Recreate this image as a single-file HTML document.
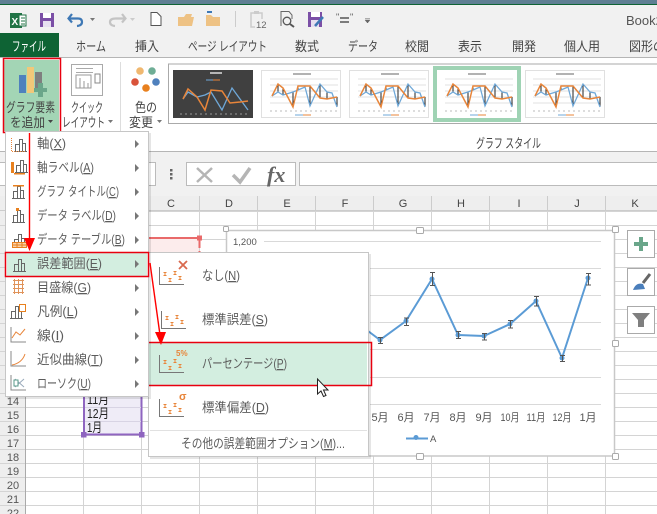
<!DOCTYPE html>
<html><head><meta charset="utf-8"><style>
html,body{margin:0;padding:0;background:#fff;width:657px;height:514px;overflow:hidden}
svg{display:block;font-family:"Liberation Sans","Noto Sans CJK JP",sans-serif}
.t{font-size:13px;fill:#444}
.m{font-size:13px;fill:#5c5c5c}
.u{text-decoration:underline}
.r{font-size:11px;fill:#555;text-anchor:middle}
.c{font-size:11px;fill:#444;text-anchor:middle}
.k{font-size:11px;fill:#555;text-anchor:middle}
.a{font-size:13px;fill:#222}
</style></head><body>
<svg width="657" height="514" viewBox="0 0 657 514" xmlns="http://www.w3.org/2000/svg">
<defs>
<symbol id="th" viewBox="0 0 80 48" width="80" height="48">
<g stroke="#e2e2e2" stroke-width="1"><path d="M8 9H76M8 15H76M8 21H76M8 27H76M8 33H76"/></g>
<g stroke="#222" stroke-width="1"><path d="M16 14V22M21 18V25M31 22V37M36 16V20M48 16V36M58 14V28M65 22V29M75 27V37"/></g>
<polyline fill="none" stroke="#6fa8d8" stroke-width="1.300" points="10,26 16,22 21,25 31,22 36,20 43,17 48,36 58,14 65,22 70,23 75,37"/>
<polyline fill="none" stroke="#e8853a" stroke-width="1.500" points="10,26 16,14 21,18 31,37 36,16 48,16 58,28 65,29 75,27"/>
<path d="M31 4H49" stroke="#999" stroke-width="1.500"/><path d="M33 45H41" stroke="#6fa8d8"/><path d="M41 45H49" stroke="#e8853a"/>
<path d="M8 41H76" stroke="#bbb" stroke-dasharray="2 3"/>
</symbol>
<symbol id="eb" viewBox="0 0 26 21" width="26" height="21">
<path d="M1.500 2V19.500H26" fill="none" stroke="#777"/>
<g fill="none" stroke="#e8853a"><path d="M5.500 7.500h3M5.500 10.500h3M7 7.500v3"/><path d="M10.500 13.500h3M10.500 16.500h3M12 13.500v3"/><path d="M15.500 6.500h3M15.500 9.500h3M17 6.500v3"/><path d="M20.500 11.500h3M20.500 14.500h3M22 11.500v3"/></g>
</symbol>
<symbol id="bars" viewBox="0 0 16 16" width="16" height="16">
<path d="M3.500 15V8.500H7.500V15M7.500 15V3.500H10.500V15M10.500 15V7.500H13.500V15M2 15.500H15" fill="none" stroke="#666"/>
</symbol>
</defs>

<!-- title bar -->
<rect width="657" height="33" fill="#f1f1f1"/>
<rect width="657" height="4" fill="#5f7f93"/>
<rect y="4" width="657" height="1" fill="#0e6334"/>
<!-- QAT -->
<rect x="10" y="13" width="12" height="15" fill="#217346"/><rect x="19" y="15" width="7" height="11" fill="#fff" stroke="#217346"/><path d="M21 18H25M21 21H25M21 24H25" stroke="#217346"/><text x="11.500" y="25" font-size="10" font-weight="bold" fill="#fff">X</text>
<rect x="40" y="13" width="14" height="14" fill="#7b4fa6"/><rect x="43" y="13" width="8" height="5" fill="#fff"/><rect x="43" y="21" width="8" height="6" fill="#e6dff0"/>
<path d="M72 14L68.500 18.500L72 22.500M69 18.500H78Q82 18.500 82 22T77 26" fill="none" stroke="#3e78b5" stroke-width="2.200"/><path d="M90 18h5l-2.500 3z" fill="#777"/>
<path d="M122 14L125.500 18.500L122 22.500M125 18.500H116Q110 18.500 110 22T115 26" fill="none" stroke="#c4c4c4" stroke-width="2.200"/><path d="M130 18h5l-2.500 3z" fill="#ccc"/>
<path d="M151 12.500H157L161 16.500V25.500H151Z" fill="#fff" stroke="#555"/>
<path d="M178 26V17H184L186 14H192L191 17H194L192 26Z" fill="#eec284"/>
<path d="M206 26V15H211L213 17H220V26Z" fill="#eec284"/><path d="M207 12H212" stroke="#3e78b5" stroke-width="2"/>
<rect x="235" y="11" width="1" height="16" fill="#ccc"/>
<rect x="251" y="13" width="11" height="14" fill="none" stroke="#ccc" stroke-width="1.500"/><rect x="254" y="11" width="5" height="3" fill="#ccc"/><rect x="255" y="19" width="12" height="9" fill="#f1f1f1"/><text x="256" y="28" font-size="9.500" fill="#666">12</text>
<path d="M281 26V11.500H289L292 15V19" fill="#f1f1f1" stroke="#666"/><circle cx="287" cy="21" r="3.800" fill="#f1f1f1" stroke="#555" stroke-width="1.300"/><path d="M290 24L294 27" stroke="#555" stroke-width="2"/>
<rect x="308" y="12" width="14" height="15" fill="#7b4fa6"/><rect x="311" y="12" width="9" height="5" fill="#fff"/><rect x="311" y="20" width="8" height="7" fill="#e6dff0"/><path d="M315 26L323 17" stroke="#3e78b5" stroke-width="2.500"/>
<text x="336" y="20" font-size="9" fill="#555">"</text><text x="350" y="20" font-size="9" fill="#555">"</text><path d="M340 18H349M340 22H349" stroke="#555" stroke-width="1.500"/>
<path d="M365 18.500H370M365 20h5l-2.500 3z" fill="#666" stroke="#666" stroke-width=".5"/>
<text x="626" y="25" font-size="13" fill="#555">Book2</text>

<!-- tabs -->
<rect y="33" width="657" height="25" fill="#f1f1f1"/>
<rect x="0" y="33" width="59" height="25" fill="#0e6334"/>
<text x="12" y="51" font-size="13" fill="#fff" textLength="34" lengthAdjust="spacingAndGlyphs">ファイル</text>
<text class="t" x="76" y="51" textLength="30" lengthAdjust="spacingAndGlyphs">ホーム</text>
<text class="t" x="135" y="51" textLength="24" lengthAdjust="spacingAndGlyphs">挿入</text>
<text class="t" x="188" y="51" textLength="79" lengthAdjust="spacingAndGlyphs">ページ レイアウト</text>
<text class="t" x="295" y="51" textLength="24" lengthAdjust="spacingAndGlyphs">数式</text>
<text class="t" x="348" y="51" textLength="30" lengthAdjust="spacingAndGlyphs">データ</text>
<text class="t" x="405" y="51" textLength="24" lengthAdjust="spacingAndGlyphs">校閲</text>
<text class="t" x="458" y="51" textLength="24" lengthAdjust="spacingAndGlyphs">表示</text>
<text class="t" x="512" y="51" textLength="24" lengthAdjust="spacingAndGlyphs">開発</text>
<text class="t" x="564" y="51" textLength="36" lengthAdjust="spacingAndGlyphs">個人用</text>
<text class="t" x="629" y="51" textLength="36" lengthAdjust="spacingAndGlyphs">図形の</text>

<!-- ribbon -->
<rect y="58" width="657" height="94" fill="#fff"/>
<rect y="57" width="657" height="1" fill="#b5b5b5"/>
<rect y="151" width="657" height="1" fill="#b5b5b5"/>
<rect x="120" y="62" width="1" height="70" fill="#ddd"/>
<rect x="168.500" y="64" width="490" height="59.500" fill="#fff" stroke="#aaa"/>
<text class="t" x="476" y="148" textLength="65" lengthAdjust="spacingAndGlyphs">グラフ スタイル</text>

<!-- add chart element -->
<rect x="4" y="60" width="55" height="71" fill="#a3d5b5"/>
<rect x="19" y="75" width="7" height="18" fill="#4f81bd"/><rect x="27" y="67" width="7" height="26" fill="#f2c879"/><rect x="35" y="72" width="7" height="17" fill="#7f7f7f"/>
<path d="M38 83H43V88H47V92H43V97H38V92H34V88H38Z" fill="#6aa68a"/>
<text class="t" x="6" y="112" textLength="49" lengthAdjust="spacingAndGlyphs">グラフ要素</text>
<text class="t" x="10" y="127" textLength="35" lengthAdjust="spacingAndGlyphs">を追加</text>
<path d="M48 120h5l-2.500 3z" fill="#444"/>
<rect x="3.500" y="58.500" width="57" height="74" fill="none" stroke="#e8000f" stroke-width="1.500"/>

<rect x="71.500" y="64.500" width="31" height="31" fill="#fff" stroke="#aaa"/>
<path d="M76 68.500H93M76 72.500H93" stroke="#aaa"/><path d="M76 88V75H91V88ZM80 88V78M84 88V81M88 88V83" fill="none" stroke="#999"/><rect x="95" y="74" width="5" height="9" fill="none" stroke="#888"/>
<text class="t" x="71" y="112" textLength="32" lengthAdjust="spacingAndGlyphs">クイック</text>
<text class="t" x="62" y="127" textLength="43" lengthAdjust="spacingAndGlyphs">レイアウト</text>
<path d="M108 120h5l-2.500 3z" fill="#777"/>

<circle cx="140" cy="71" r="3.800" fill="#f0b870"/><circle cx="152" cy="71" r="3.800" fill="#6fae96"/><circle cx="135" cy="82" r="3.800" fill="#d9533a"/><circle cx="156" cy="82" r="3.800" fill="#4f81bd"/><circle cx="146" cy="88" r="3.800" fill="#e8801e"/>
<text class="t" x="135" y="112" textLength="22" lengthAdjust="spacingAndGlyphs">色の</text>
<text class="t" x="129" y="127" textLength="24" lengthAdjust="spacingAndGlyphs">変更</text>
<path d="M157 120h5l-2.500 3z" fill="#777"/>

<!-- gallery -->
<rect x="173" y="70" width="80" height="48" fill="#404040"/>
<path d="M210 73H222" stroke="#ddd" stroke-width="1.500"/><path d="M206 80H213" stroke="#6fa8d8"/><path d="M213 80H220" stroke="#e8853a"/>
<path d="M180 114H250" stroke="#999" stroke-dasharray="2 3"/>
<polyline fill="none" stroke="#6fa8d8" stroke-width="1.300" points="183,99 188,92 197,97 205,95 211,92 222,110 232,88 240,99 248,110"/>
<polyline fill="none" stroke="#e8853a" stroke-width="1.500" points="183,99 188,89 197,97 205,110 211,90 222,91 230,103 240,102 248,101"/>
<rect x="261.500" y="70.500" width="79" height="47" fill="#fff" stroke="#e0e0e0"/><use href="#th" x="262" y="70"/>
<rect x="349.500" y="70.500" width="79" height="47" fill="#fff" stroke="#e0e0e0"/><use href="#th" x="350" y="70"/>
<rect x="433" y="66" width="88" height="56" fill="#9fd3b4"/><rect x="437" y="70" width="80" height="48" fill="#fff"/><use href="#th" x="437" y="70"/>
<rect x="525.500" y="70.500" width="79" height="47" fill="#fff" stroke="#e0e0e0"/><use href="#th" x="525" y="70"/>

<!-- formula bar -->
<rect y="152" width="657" height="59" fill="#f1f1f1"/>
<rect x="-1" y="162.500" width="156.500" height="23" fill="#fff" stroke="#bbb"/>
<g fill="#666"><rect x="170" y="169" width="2.500" height="2.500"/><rect x="170" y="173" width="2.500" height="2.500"/><rect x="170" y="177" width="2.500" height="2.500"/></g>
<rect x="186.500" y="162.500" width="109" height="23" fill="#fff" stroke="#bbb"/>
<path d="M197 168L212 182M212 168L197 182" stroke="#b5b5b5" stroke-width="2.500"/>
<path d="M233 175L240 182L250 168" fill="none" stroke="#b5b5b5" stroke-width="3.500"/>
<text x="267" y="182" font-family="Liberation Serif" font-style="italic" font-weight="bold" font-size="22" fill="#666">fx</text>
<rect x="299.500" y="162.500" width="360" height="23" fill="#fff" stroke="#bbb"/>

<!-- column headers -->
<rect y="196" width="657" height="15" fill="#eeeeee"/>
<rect y="210.500" width="657" height="1" fill="#aaa"/>
<g fill="#ccc"><rect x="199" y="196" width="1" height="15"/><rect x="257" y="196" width="1" height="15"/><rect x="315" y="196" width="1" height="15"/><rect x="373" y="196" width="1" height="15"/><rect x="431" y="196" width="1" height="15"/><rect x="489" y="196" width="1" height="15"/><rect x="547" y="196" width="1" height="15"/><rect x="605" y="196" width="1" height="15"/><rect x="141" y="196" width="1" height="15"/><rect x="83" y="196" width="1" height="15"/></g>
<text class="c" x="171" y="207">C</text><text class="c" x="229" y="207">D</text><text class="c" x="287" y="207">E</text><text class="c" x="345" y="207">F</text><text class="c" x="403" y="207">G</text><text class="c" x="461" y="207">H</text><text class="c" x="519" y="207">I</text><text class="c" x="577" y="207">J</text><text class="c" x="635" y="207">K</text>

<!-- grid -->
<rect x="0" y="211" width="25" height="303" fill="#eeeeee"/>
<g stroke="#d4d4d4"><path d="M0 225.500H657M0 239.500H657M0 253.500H657M0 267.500H657M0 281.500H657M0 295.500H657M0 309.500H657M0 323.500H657M0 337.500H657M0 351.500H657M0 365.500H657M0 379.500H657M0 393.500H657M0 407.500H657M0 421.500H657M0 435.500H657M0 449.500H657M0 463.500H657M0 477.500H657M0 491.500H657M0 505.500H657"/>
<path d="M83.500 211V514M141.500 211V514M199.500 211V514M257.500 211V514M315.500 211V514M373.500 211V514M431.500 211V514M489.500 211V514M547.500 211V514M605.500 211V514"/></g>
<path d="M25.500 211V514" stroke="#aaa"/>
<text class="r" x="13" y="405">14</text><text class="r" x="13" y="419">15</text><text class="r" x="13" y="433">16</text><text class="r" x="13" y="447">17</text><text class="r" x="13" y="461">18</text><text class="r" x="13" y="475">19</text><text class="r" x="13" y="489">20</text><text class="r" x="13" y="503">21</text><text class="r" x="13" y="517">22</text>

<!-- selection -->
<rect x="142" y="238" width="57" height="20" fill="#fcecec"/>
<path d="M142 238H199" stroke="#e96a6a" stroke-width="2"/><path d="M199.500 240V252" stroke="#e96a6a" stroke-width="2" stroke-dasharray="8 3"/>
<rect x="197" y="235.500" width="5" height="5" fill="#e96a6a"/>
<rect x="84" y="397" width="57" height="37" fill="#efecf7"/>
<path d="M84 397V434.500H141.500V397" fill="none" stroke="#8f65c0" stroke-width="2"/>
<path d="M85 407.500H141M85 421.500H141" stroke="#d8d4e4"/>
<rect x="81" y="432" width="5.500" height="5.500" fill="#8f65c0"/><rect x="139" y="432" width="5.500" height="5.500" fill="#8f65c0"/>
<text class="a" x="87" y="404" textLength="22" lengthAdjust="spacingAndGlyphs">11月</text><text class="a" x="87" y="418" textLength="22" lengthAdjust="spacingAndGlyphs">12月</text><text class="a" x="87" y="432" textLength="15" lengthAdjust="spacingAndGlyphs">1月</text>

<!-- chart -->
<rect x="226.500" y="230.500" width="388" height="225.500" fill="#fff" stroke="#c8c8c8" stroke-width="1.500"/>
<g fill="#fff" stroke="#aaa"><rect x="223.500" y="226.500" width="5" height="5" rx="1"/><rect x="416.500" y="227.500" width="7" height="6" rx="1"/><rect x="612.500" y="226.500" width="6" height="6" rx="1"/><rect x="612.500" y="340.500" width="6" height="6" rx="1"/><rect x="612.500" y="453.500" width="6" height="6" rx="1"/><rect x="416.500" y="453.500" width="7" height="6" rx="1"/></g>
<text x="233" y="245" font-size="9.500" fill="#555">1,200</text>
<g stroke="#d9d9d9"><path d="M264 241.500H601M370 268.500H601M370 295.500H601M370 322.500H601M370 349.500H601M370 377.500H601M370 404.500H601"/></g>
<polyline fill="none" stroke="#5b9bd5" stroke-width="2" stroke-linejoin="round" points="368,331 380,340 406,321 432,279 458,335 484,336 510,324 536,301 562,358 588,278"/>
<g fill="#5b9bd5"><circle cx="380" cy="340" r="2.500"/><circle cx="406" cy="321" r="2.500"/><circle cx="432" cy="279" r="2.500"/><circle cx="458" cy="335" r="2.500"/><circle cx="484" cy="336" r="2.500"/><circle cx="510" cy="324" r="2.500"/><circle cx="536" cy="301" r="2.500"/><circle cx="562" cy="358" r="2.500"/><circle cx="588" cy="278" r="2.500"/></g>
<g stroke="#555" stroke-width="1" fill="none"><path d="M378 337.500h5M378 343.500h5M380.500 337.500v6"/><path d="M404 318h5M404 325.500h5M406.500 318v7"/><path d="M430 272.500h5M430 285.500h5M432.500 272.500v13"/><path d="M456 331.500h5M456 338.500h5M458.500 331.500v7"/><path d="M482 333.500h5M482 340h5M484.500 333.500v7"/><path d="M508 320.500h5M508 328h5M510.500 320.500v7"/><path d="M534 296.500h5M534 306h5M536.500 296.500v9"/><path d="M560 355.500h5M560 361.500h5M562.500 355.500v6"/><path d="M586 273.500h5M586 285h5M588.500 273.500v11"/></g>
<text class="k" x="380" y="421">5月</text><text class="k" x="406" y="421">6月</text><text class="k" x="432" y="421">7月</text><text class="k" x="458" y="421">8月</text><text class="k" x="484" y="421">9月</text><text class="k" x="510" y="421" textLength="19" lengthAdjust="spacingAndGlyphs">10月</text><text class="k" x="536" y="421" textLength="19" lengthAdjust="spacingAndGlyphs">11月</text><text class="k" x="562" y="421" textLength="19" lengthAdjust="spacingAndGlyphs">12月</text><text class="k" x="588" y="421">1月</text>
<path d="M406 438.500H428" stroke="#5b9bd5" stroke-width="2"/><circle cx="416" cy="437.500" r="2.500" fill="#5b9bd5"/><text x="430" y="442" font-size="9.500" fill="#555">A</text>

<!-- chart buttons -->
<g fill="#fff" stroke="#aaa"><rect x="627.500" y="230.500" width="27" height="27"/><rect x="627.500" y="268.500" width="27" height="27"/><rect x="627.500" y="306.500" width="27" height="27"/></g>
<path d="M639 237H643V242H648V246H643V251H639V246H634V242H639Z" fill="#6aa68a"/>
<path d="M633 290Q636 282 643 284L645 289Z" fill="#4a7ebb"/><path d="M643 283L650 274" stroke="#666" stroke-width="3"/>
<path d="M632 313H650L644 320V327H638V320Z" fill="#7f7f7f"/>

<!-- submenu -->
<rect x="150" y="254" width="221" height="205" fill="#000" opacity=".1"/>
<rect x="148.500" y="252.500" width="220" height="204" fill="#fff" stroke="#c6c6c6"/>
<path d="M150 430.500H367" stroke="#e1e1e1"/>
<use href="#eb" x="158" y="265"/><path d="M179 261L187 269M187 261L179 269" stroke="#d9694e" stroke-width="1.800"/>
<text class="m" x="202" y="280" textLength="38" lengthAdjust="spacingAndGlyphs">なし(<tspan class="u">N</tspan>)</text>
<use href="#eb" x="160" y="309"/>
<text class="m" x="202" y="324" textLength="66" lengthAdjust="spacingAndGlyphs">標準誤差(<tspan class="u">S</tspan>)</text>
<rect x="149" y="343" width="218" height="42" fill="#d3eee0"/>
<use href="#eb" x="158" y="353"/><text x="176" y="356" font-size="8" font-weight="bold" fill="#e8853a">5%</text>
<text class="m" x="202" y="368" textLength="85" lengthAdjust="spacingAndGlyphs">パーセンテージ(<tspan class="u">P</tspan>)</text>
<rect x="146.500" y="342.500" width="225" height="43" fill="none" stroke="#e8000f" stroke-width="1.500"/>
<use href="#eb" x="158" y="397"/><text x="179" y="400" font-size="11" font-weight="bold" fill="#e8853a">σ</text>
<text class="m" x="202" y="412" textLength="67" lengthAdjust="spacingAndGlyphs">標準偏差(<tspan class="u">D</tspan>)</text>
<text class="m" x="181" y="448" textLength="164" lengthAdjust="spacingAndGlyphs">その他の誤差範囲オプション(<tspan class="u">M</tspan>)...</text>
<!-- cursor -->
<path d="M317.500 379V394L321 391L323.500 396.500L326 395.500L323.500 390H328Z" fill="#fff" stroke="#222"/>

<!-- main menu -->
<rect x="7" y="133" width="144" height="266" fill="#000" opacity=".1"/>
<rect x="5.500" y="131.500" width="143" height="265" fill="#fff" stroke="#c6c6c6"/>
<rect x="7" y="253" width="140" height="23" fill="#d3eee0"/>
<use href="#bars" x="12" y="136"/><path d="M11.500 138V151.500H26" fill="none" stroke="#e8853a" stroke-dasharray="1 1"/>
<use href="#bars" x="13" y="157"/><rect x="11" y="162" width="3" height="11" fill="#e8801e"/><rect x="14" y="173" width="11" height="1.500" fill="#e8801e"/>
<use href="#bars" x="10" y="183"/><rect x="13" y="185" width="11" height="1.500" fill="#e8801e"/>
<use href="#bars" x="10" y="207"/><rect x="16" y="208" width="3" height="3" fill="#e8801e"/>
<use href="#bars" x="11" y="231"/><rect x="12.500" y="242.500" width="14" height="5" fill="#f8d2a8" stroke="#e8801e"/><path d="M12 245H26M17 242V248M22 242V248" stroke="#e8801e"/>
<use href="#bars" x="11" y="256"/>
<path d="M13 280.500H24M13 284.500H24M13 288.500H24M13 292.500H24M14.500 279V294M18.500 279V294M22.500 279V294" stroke="#e0935a"/>
<use href="#bars" x="8" y="303"/><rect x="19.500" y="304.500" width="6" height="7" fill="#fff" stroke="#e8801e"/>
<path d="M11 327V342H26" fill="none" stroke="#888"/><path d="M12 338L16 332L20 335L25 329" fill="none" stroke="#e8853a"/>
<path d="M11 351V366H26" fill="none" stroke="#888"/><path d="M12 365Q22 363 25 354" fill="none" stroke="#e8853a"/>
<path d="M11 375V390H26" fill="none" stroke="#888"/><path d="M15 379L24 387M24 379L15 387" stroke="#9ab"/><rect x="14" y="380" width="4" height="6" fill="#fff" stroke="#5a9a8a"/>
<text class="m" x="37" y="148" textLength="29" lengthAdjust="spacingAndGlyphs">軸(<tspan class="u">X</tspan>)</text>
<text class="m" x="37" y="172" textLength="57" lengthAdjust="spacingAndGlyphs">軸ラベル(<tspan class="u">A</tspan>)</text>
<text class="m" x="37" y="196" textLength="82" lengthAdjust="spacingAndGlyphs">グラフ タイトル(<tspan class="u">C</tspan>)</text>
<text class="m" x="37" y="220" textLength="79" lengthAdjust="spacingAndGlyphs">データ ラベル(<tspan class="u">D</tspan>)</text>
<text class="m" x="37" y="244" textLength="88" lengthAdjust="spacingAndGlyphs">データ テーブル(<tspan class="u">B</tspan>)</text>
<text class="m" x="37" y="268" textLength="65" lengthAdjust="spacingAndGlyphs">誤差範囲(<tspan class="u">E</tspan>)</text>
<text class="m" x="37" y="292" textLength="54" lengthAdjust="spacingAndGlyphs">目盛線(<tspan class="u">G</tspan>)</text>
<text class="m" x="37" y="316" textLength="41" lengthAdjust="spacingAndGlyphs">凡例(<tspan class="u">L</tspan>)</text>
<text class="m" x="37" y="340" textLength="27" lengthAdjust="spacingAndGlyphs">線(<tspan class="u">I</tspan>)</text>
<text class="m" x="37" y="364" textLength="66" lengthAdjust="spacingAndGlyphs">近似曲線(<tspan class="u">T</tspan>)</text>
<text class="m" x="37" y="388" textLength="54" lengthAdjust="spacingAndGlyphs">ローソク(<tspan class="u">U</tspan>)</text>
<g fill="#777"><path d="M135 140l4 4l-4 4zM135 164l4 4l-4 4zM135 188l4 4l-4 4zM135 212l4 4l-4 4zM135 236l4 4l-4 4zM135 260l4 4l-4 4zM135 284l4 4l-4 4zM135 308l4 4l-4 4zM135 332l4 4l-4 4zM135 356l4 4l-4 4zM135 380l4 4l-4 4z"/></g>
<rect x="5.500" y="252.500" width="143" height="24" fill="none" stroke="#e8000f" stroke-width="1.500"/>

<!-- red arrows -->
<path d="M29.500 133V240" stroke="#f00" stroke-width="1.400"/><path d="M24 238H35L29.500 251Z" fill="#f00"/>
<path d="M150 263L160 335" stroke="#f00" stroke-width="1.400"/><path d="M155 332H166L161 345Z" fill="#f00"/>
</svg>
</body></html>
